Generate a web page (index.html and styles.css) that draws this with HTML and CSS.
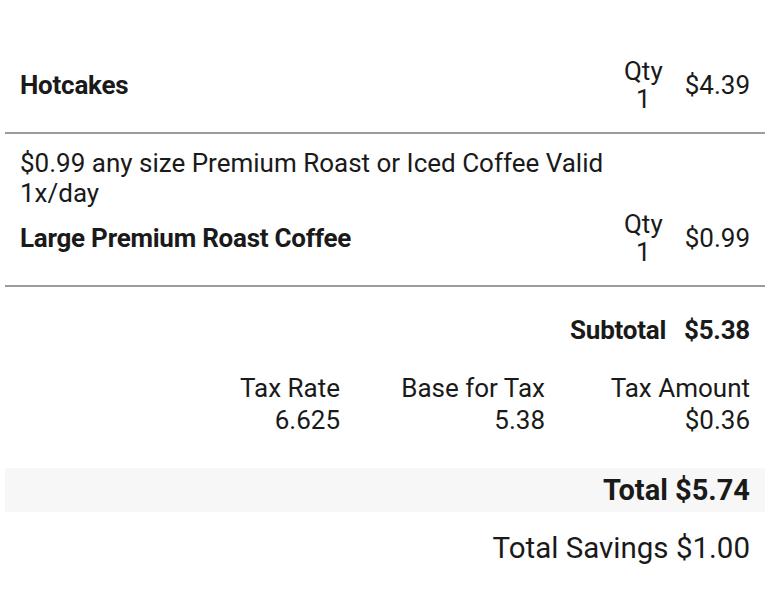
FILE: index.html
```html
<!DOCTYPE html>
<html lang="en">
<head>
<meta charset="utf-8">
<title>Receipt</title>
<link rel="stylesheet" href="styles.css">
</head>
<body>
<div class="receipt">
  <div class="item">
    <div class="item-line">
      <div class="item-name">Hotcakes</div>
      <div class="qty"><span>Qty</span><span>1</span></div>
      <div class="price">$4.39</div>
    </div>
  </div>
  <div class="item">
    <div class="deal">$0.99 any size Premium Roast or Iced Coffee Valid 1x/day</div>
    <div class="item-line">
      <div class="item-name">Large Premium Roast Coffee</div>
      <div class="qty"><span>Qty</span><span>1</span></div>
      <div class="price">$0.99</div>
    </div>
  </div>
  <div class="subtotal"><span>Subtotal</span><span>$5.38</span></div>
  <div class="tax">
    <div class="tax-col"><span>Tax Rate</span><span>6.625</span></div>
    <div class="tax-col"><span>Base for Tax</span><span>5.38</span></div>
    <div class="tax-col"><span>Tax Amount</span><span>$0.36</span></div>
  </div>
  <div class="total">Total $5.74</div>
  <div class="savings">Total Savings $1.00</div>
</div>
</body>
</html>
```

FILE: styles.css
```css
html, body {
  margin: 0;
  padding: 0;
  background: #ffffff;
}
body {
  font-family: Roboto, "Noto Sans", sans-serif;
  color: #1a1a1a;
  font-size: 26px;
}
.receipt {
  margin: 0 11px 0 5px;
  padding-top: 43px;
}
.item {
  padding: 14px 15px 19px 15px;
  border-bottom: 2px solid #9c9c9c;
}
.item-line {
  display: flex;
  align-items: center;
}
.item-name {
  flex: 1;
  font-weight: 700;
  letter-spacing: -0.25px;
  line-height: 30px;
}
.deal {
  max-width: 600px;
  line-height: 30px;
  margin-bottom: 2px;
}
.qty {
  display: flex;
  flex-direction: column;
  align-items: center;
  line-height: 28px;
  margin-right: 22px;
}
.price {
  line-height: 30px;
}
.subtotal {
  display: flex;
  justify-content: flex-end;
  gap: 18px;
  padding: 28px 15px 0 15px;
  font-weight: 700;
  letter-spacing: -0.25px;
}
.tax {
  display: grid;
  grid-template-columns: repeat(3, 205px);
  justify-content: end;
  padding: 27px 15px 0 15px;
  line-height: 32px;
}
.tax-col {
  display: flex;
  flex-direction: column;
  align-items: flex-end;
}
.total {
  margin-top: 32px;
  background: #f7f7f7;
  height: 44px;
  line-height: 44px;
  text-align: right;
  padding: 0 15px;
  font-size: 29px;
  font-weight: 700;
}
.savings {
  text-align: right;
  padding: 19px 15px 0 15px;
  font-size: 29.5px;
}
```
